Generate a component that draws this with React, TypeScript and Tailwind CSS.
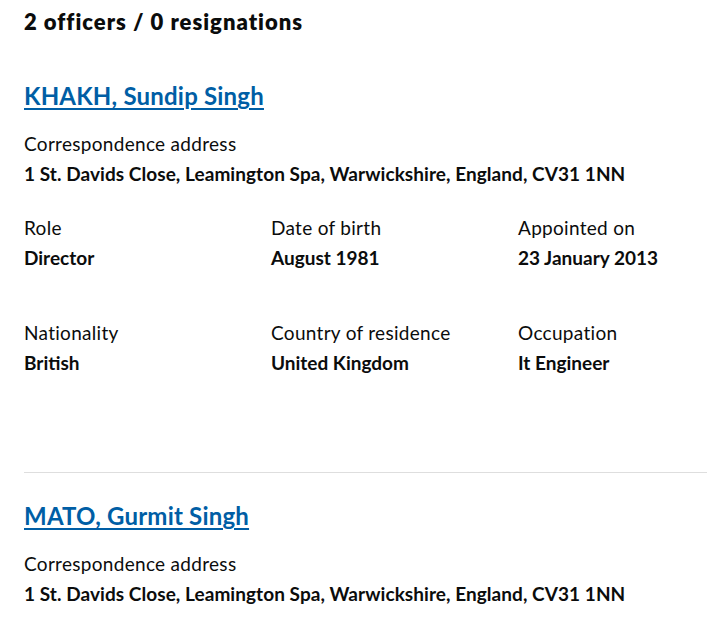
import React from "react";

type Field = { label: string; value: string };

interface Officer {
  name: string;
  address: string;
  rows: Field[][];
}

const OFFICERS: Officer[] = [
  {
    name: "KHAKH, Sundip Singh",
    address: "1 St. Davids Close, Leamington Spa, Warwickshire, England, CV31 1NN",
    rows: [
      [
        { label: "Role", value: "Director" },
        { label: "Date of birth", value: "August 1981" },
        { label: "Appointed on", value: "23 January 2013" },
      ],
      [
        { label: "Nationality", value: "British" },
        { label: "Country of residence", value: "United Kingdom" },
        { label: "Occupation", value: "It Engineer" },
      ],
    ],
  },
  {
    name: "MATO, Gurmit Singh",
    address: "1 St. Davids Close, Leamington Spa, Warwickshire, England, CV31 1NN",
    rows: [],
  },
];

const OfficerBlock: React.FC<{ officer: Officer }> = ({ officer }) => (
  <div>
    <h3 className="text-[24px] font-bold leading-[30px] tracking-[0.2px]">
      <a
        href="#"
        className="text-[#005ea5] underline decoration-2 underline-offset-[3px]"
      >
        {officer.name}
      </a>
    </h3>
    <div className="mt-[18px] text-[19px] leading-[30px]">
      <p className="tracking-[0.3px]">Correspondence address</p>
      <p className="font-bold tracking-[0.06px]">{officer.address}</p>
    </div>
    {officer.rows.map((row, i) => (
      <div
        key={i}
        className={`grid grid-cols-[247px_247px_1fr] text-[19px] leading-[30px] ${
          i === 0 ? "mt-[24px]" : "mt-[45px]"
        }`}
      >
        {row.map((f) => (
          <div key={f.label}>
            <p className="tracking-[0.3px]">{f.label}</p>
            <p className="font-bold">{f.value}</p>
          </div>
        ))}
      </div>
    ))}
  </div>
);

export default function App() {
  return (
    <div
      className="min-h-screen bg-white pl-6 pt-[7px] text-[#0b0c0c]"
      style={{ fontFamily: "Lato, 'Noto Sans', sans-serif" }}
    >
      <h2 className="text-[22px] font-extrabold leading-[30px] tracking-[1px]">
        2 officers / 0 resignations
      </h2>
      <div className="mt-[44px]">
        <OfficerBlock officer={OFFICERS[0]} />
      </div>
      <div className="mt-[94px] border-t border-[#dedede] pt-[28px]">
        <OfficerBlock officer={OFFICERS[1]} />
      </div>
    </div>
  );
}
